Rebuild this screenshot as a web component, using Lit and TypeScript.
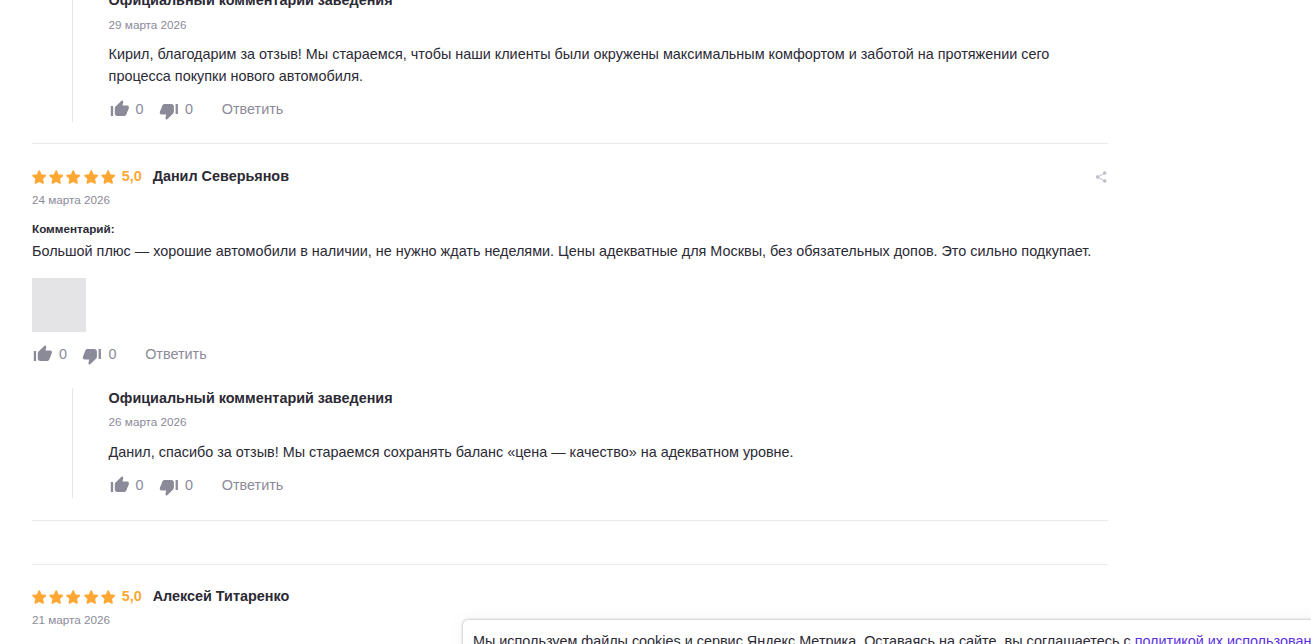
import {LitElement, html, css, svg, nothing} from 'lit';
import {customElement, property} from 'lit/decorators.js';

interface Reply {
  date: string;
  text: string;
}

interface Review {
  author: string;
  rating: string;
  date: string;
  text?: string;
  hasPhoto?: boolean;
  reply?: Reply;
}

const firstReply: Reply = {
  date: '29 марта 2026',
  text: 'Кирил, благодарим за отзыв! Мы стараемся, чтобы наши клиенты были окружены максимальным комфортом и заботой на протяжении сего процесса покупки нового автомобиля.',
};

const danil: Review = {
  author: 'Данил Северьянов',
  rating: '5,0',
  date: '24 марта 2026',
  text: 'Большой плюс — хорошие автомобили в наличии, не нужно ждать неделями. Цены адекватные для Москвы, без обязательных допов. Это сильно подкупает.',
  hasPhoto: true,
  reply: {
    date: '26 марта 2026',
    text: 'Данил, спасибо за отзыв! Мы стараемся сохранять баланс «цена — качество» на адекватном уровне.',
  },
};

const alexey: Review = {
  author: 'Алексей Титаренко',
  rating: '5,0',
  date: '21 марта 2026',
};

const thumb = svg`
  <path d="M0.8 6h2.300v10h-2.300z"/>
  <path d="M5.300 6.700 12 .2 13 1.100c.3.300.3.700.2 1.200l-.7 3.300h4.700c1.400 0 2.100 1.300 1.600 2.600l-2.400 6c-.5 1.200-1.200 1.800-2.400 1.800H7.400c-1.600 0-2.600-1-2.600-2.500V8.200c0-.6.1-1.100.5-1.500z"/>
`;

@customElement('star-rating')
class StarRating extends LitElement {
  static styles = css`
    :host {
      display: flex;
      gap: 2.2px;
    }

    svg {
      width: 15px;
      height: 15px;
      fill: #ffa733;
      stroke: #ffa733;
      stroke-width: 1.7;
      stroke-linejoin: round;
    }
  `;

  render() {
    return [1, 2, 3, 4, 5].map(() => html`
      <svg viewBox="0 0 15 15">
        <path d="M7.200 1.100 8.900 5.100 13.300 5.600 10.100 8.600 11 12.900 7.200 10.900 3.400 12.900 4.300 8.600 1.100 5.600 5.500 5.100z"/>
      </svg>
    `);
  }
}

@customElement('vote-bar')
class VoteBar extends LitElement {
  static styles = css`
    :host {
      display: flex;
      align-items: center;
      height: 22px;
      padding-left: 1px;
      color: #8b8a99;
      font-size: 14.4px;
      line-height: 21.6px;
    }

    .vote {
      display: flex;
      align-items: center;
      gap: 6px;
      width: 49.4px;
    }

    svg {
      width: 20px;
      height: 20px;
      fill: #8b8a99;
    }

    .down {
      transform: rotate(180deg) translateX(0.3px);
    }

    .answer {
      margin-left: 13.4px;
    }
  `;

  render() {
    return html`
      <div class="vote"><svg viewBox="0 0 20 20">${thumb}</svg><span>0</span></div>
      <div class="vote"><svg class="down" viewBox="0 0 20 20">${thumb}</svg><span>0</span></div>
      <span class="answer">Ответить</span>
    `;
  }
}

@customElement('official-reply')
class OfficialReply extends LitElement {
  @property({attribute: false}) reply!: Reply;

  static styles = css`
    :host {
      display: block;
      margin-left: 40px;
      padding: 0 0 1.2px 35.6px;
      border-left: 1px solid #e6e6ee;
      font-size: 14.4px;
      line-height: 21.6px;
    }

    .title {
      font-weight: 700;
    }

    .date {
      margin-top: 5px;
      color: #8b8a99;
      font-size: 11.7px;
      line-height: 16px;
    }

    .text {
      margin: 11.5px 0 11.7px;
    }
  `;

  render() {
    return html`
      <div class="title">Официальный комментарий заведения</div>
      <div class="date">${this.reply.date}</div>
      <div class="text">${this.reply.text}</div>
      <vote-bar></vote-bar>
    `;
  }
}

@customElement('review-card')
class ReviewCard extends LitElement {
  @property({attribute: false}) review!: Review;

  static styles = css`
    :host {
      display: block;
      padding-top: 21px;
      border-top: 1px solid #e8e8ee;
    }

    .head {
      display: flex;
      align-items: center;
      height: 22px;
      font-weight: 700;
    }

    star-rating {
      margin-top: 2px;
    }

    .rating,
    .author {
      margin-top: 1px;
    }

    .rating {
      margin-left: 6.1px;
      margin-right: 10.8px;
      color: #ffa733;
    }

    .share {
      width: 12px;
      height: 12px;
      margin: 2px 1px 0 auto;
      fill: #c2c1ca;
      stroke: #c2c1ca;
    }

    .date {
      margin-top: 4.7px;
      color: #8b8a99;
      font-size: 11.7px;
      line-height: 16px;
    }

    .label {
      margin-top: 13.3px;
      font-size: 11.7px;
      font-weight: 700;
      line-height: 16px;
    }

    .text {
      margin-top: 3.6px;
    }

    .photo {
      width: 54px;
      height: 54px;
      margin: 15.6px 0 11.8px;
      background: #e4e4e6;
    }

    official-reply {
      margin-top: 22px;
    }
  `;

  render() {
    const {author, rating, date, text, hasPhoto, reply} = this.review;
    return html`
      <div class="head">
        <star-rating></star-rating>
        <span class="rating">${rating}</span>
        <span class="author">${author}</span>
        ${text ? html`
          <svg class="share" viewBox="0 0 12 12">
            <path d="M9.700 2.200 2.700 6l7 4" fill="none"/>
            <circle cx="9.700" cy="2.100" r="1.400"/>
            <circle cx="2.700" cy="6" r="1.400"/>
            <circle cx="9.700" cy="10" r="1.400"/>
          </svg>
        ` : nothing}
      </div>
      <div class="date">${date}</div>
      ${text ? html`
        <div class="label">Комментарий:</div>
        <div class="text">${text}</div>
        ${hasPhoto ? html`<div class="photo"></div>` : nothing}
        <vote-bar></vote-bar>
      ` : nothing}
      ${reply ? html`<official-reply .reply=${reply}></official-reply>` : nothing}
    `;
  }
}

@customElement('app-root')
class AppRoot extends LitElement {
  static styles = css`
    :host {
      display: block;
      position: relative;
      height: 644px;
      overflow: hidden;
      background: #fff;
      color: #2b2a35;
      font-family: "Liberation Sans", Arial, sans-serif;
      font-size: 14.4px;
      line-height: 21.6px;
    }

    .feed {
      width: 1076px;
      margin-left: 32px;
    }

    /* The feed is scrolled so that the first reply is cut at its title */
    .first {
      margin-top: -10px;
      margin-bottom: 21px;
    }

    .slot {
      height: 42.8px;
      margin-top: 22px;
      border-top: 1px solid #e8e8ee;
    }

    .slot + review-card {
      padding-top: 20.4px;
    }

    .cookies {
      position: absolute;
      top: 620px;
      left: 463px;
      width: 900px;
      height: 60px;
      box-sizing: border-box;
      padding: 11px 10px;
      border-radius: 5px;
      background: #fff;
      box-shadow: 0 0 3px rgba(40, 40, 50, 0.4), 0 0 20px rgba(0, 0, 0, 0.05);
      white-space: nowrap;
    }

    .cookies a {
      color: #5a30e0;
      text-decoration: none;
    }
  `;

  render() {
    return html`
      <div class="feed">
        <official-reply class="first" .reply=${firstReply}></official-reply>
        <review-card .review=${danil}></review-card>
        <div class="slot"></div>
        <review-card .review=${alexey}></review-card>
      </div>
      <div class="cookies">
        Мы используем файлы cookies и сервис Яндекс.Метрика. Оставаясь на сайте, вы соглашаетесь с <a>политикой их использования</a>
      </div>
    `;
  }
}
